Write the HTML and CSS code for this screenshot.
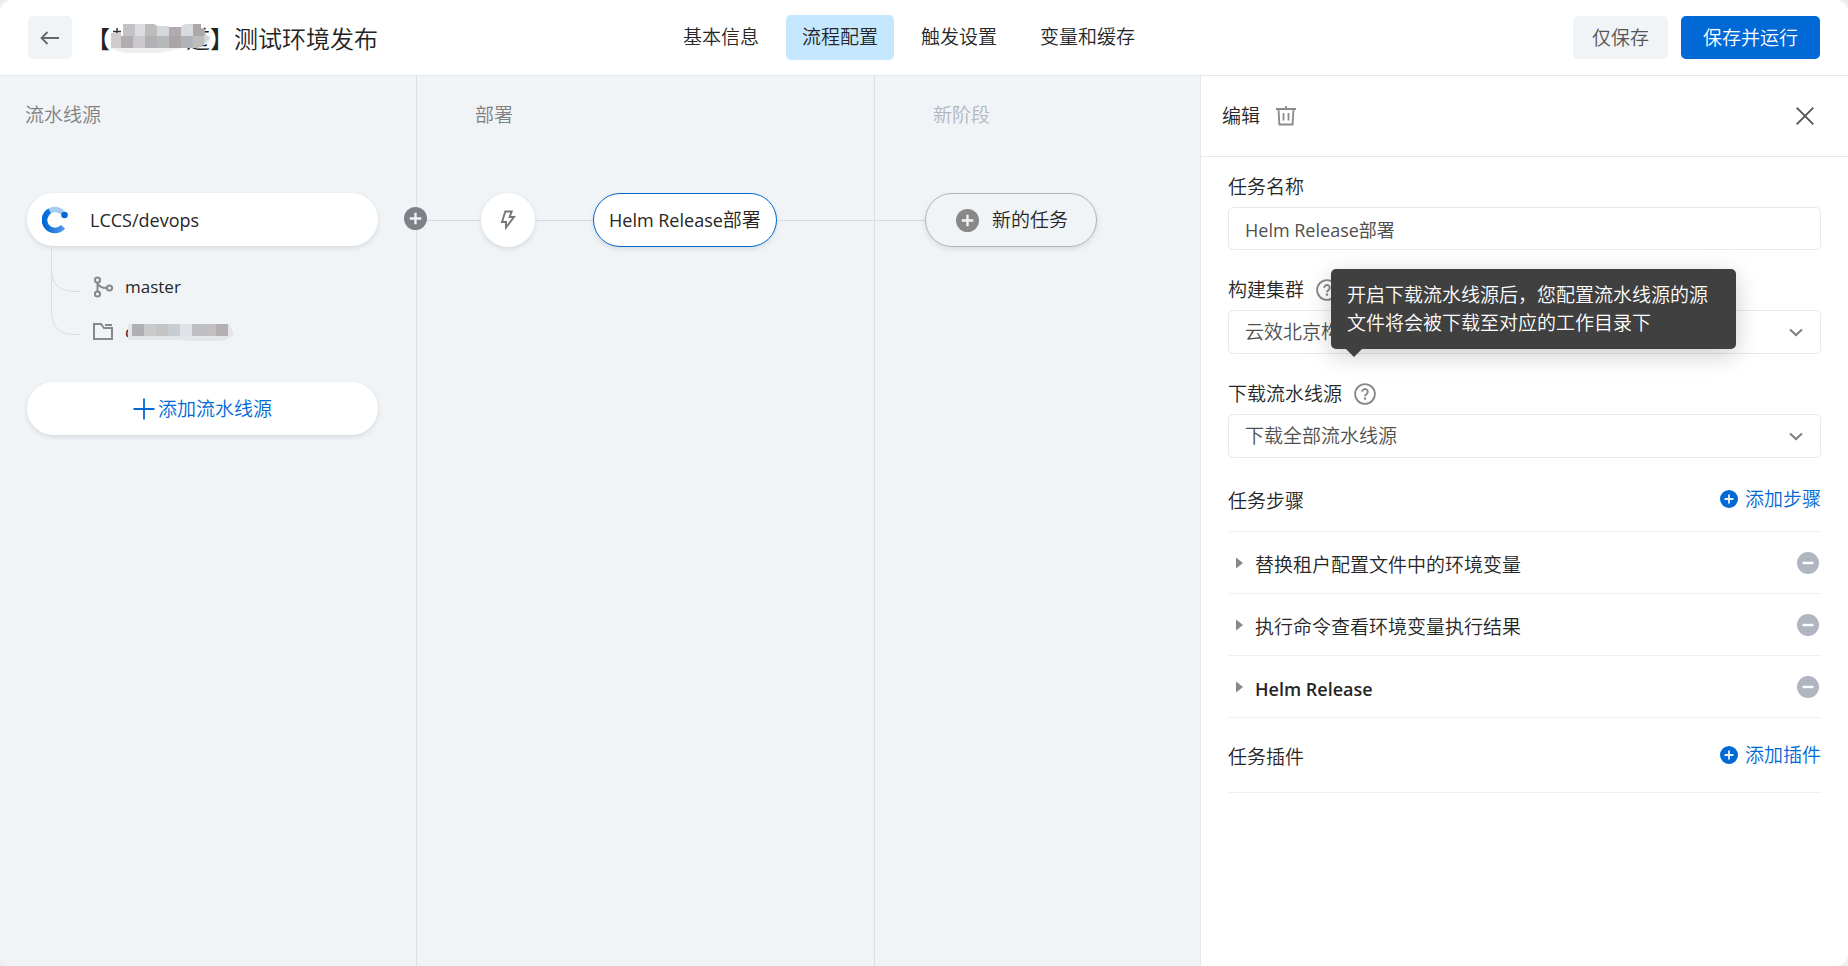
FILE: index.html
```html
<!DOCTYPE html>
<html lang="zh-CN">
<head>
<meta charset="utf-8">
<title>测试环境发布</title>
<link rel="stylesheet" href="styles.css">
</head>
<body>
<svg class="defs" aria-hidden="true">
  <symbol id="plus-dot" viewBox="0 0 24 24"><circle cx="12" cy="12" r="12" fill="currentColor"/><path d="M12 6v12M6 12h12" stroke="#f1f4f7" stroke-width="2.400"/></symbol>
  <symbol id="minus-dot" viewBox="0 0 22 22"><circle cx="11" cy="11" r="11" fill="currentColor"/><path d="M5.500 11h11" stroke="#fff" stroke-width="2.400"/></symbol>
  <symbol id="help" viewBox="0 0 22 22"><circle cx="11" cy="11" r="9.900" fill="none" stroke="currentColor" stroke-width="1.800"/><path d="M8.200 8.800a2.800 2.700 0 1 1 4.400 2.200c-1 .7-1.600 1-1.600 2.200" fill="none" stroke="currentColor" stroke-width="1.900"/><path d="M11 14.500v2.200" stroke="currentColor" stroke-width="2.200"/></symbol>
  <symbol id="chevron" viewBox="0 0 14 9"><path d="M1 1.500l6 5.500 6-5.500" fill="none" stroke="currentColor" stroke-width="2.200"/></symbol>
  <symbol id="caret" viewBox="0 0 7 12"><path d="M0 .5L7 6 0 11.500z" fill="currentColor"/></symbol>
</svg>
<div class="app">
  <header class="topbar">
    <div class="topbar-left">
      <button class="back" type="button" aria-label="返回">
        <svg width="20" height="14" viewBox="0 0 20 14" fill="none" stroke="#666" stroke-width="1.800"><path d="M19 7H1.500M7.500 1L1.500 7l6 6"/></svg>
      </button>
      <h1 class="title">【<span class="masked">道<svg class="mosaic" width="100" height="32" viewBox="0 0 100 32" aria-hidden="true">
        <path d="M1 0h90v12H1z" fill="#fff"/>
        <path d="M3 8.500h8M7 5v7" stroke="#333" stroke-width="1.500"/>
        <path d="M1 12h99v8l-16 5H70q-10 4-24 5H22q-14 0-21-5z" fill="#eee"/>
        <path d="M13 1h12v12H13z" fill="#c4c2c2"/><path d="M25 1h10v12H25z" fill="#dcdde0"/><path d="M35 1h9l5 3v9H35z" fill="#bdbbbb"/><path d="M47 3h12v10H47z" fill="#d5d7da"/><path d="M59 4h12v9H59z" fill="#b1aaac"/><path d="M71 3l5-2h7v12H71z" fill="#d9dade"/><path d="M83 1h8v4l4 1v7H83z" fill="#aca8a9"/>
        <path d="M1 10h10v15H1z" fill="#cfcccd"/><path d="M11 13h12v12H11z" fill="#b1acad"/><path d="M23 13h12v12H23z" fill="#cbc9cd"/><path d="M35 13h12v12H35z" fill="#b0b1b3"/><path d="M47 13h12v12H47z" fill="#b6b8ba"/><path d="M59 13h12v12H59z" fill="#a9a4a5"/><path d="M71 13h12v12H71z" fill="#b0b3b7"/><path d="M83 13h11v9l-6 3h-5z" fill="#bdbdc0"/><path d="M94 11l6 4-6 6z" fill="#d1cfd0"/>
      </svg></span>】测试环境发布</h1>
    </div>
    <nav class="tabs">
      <a class="tab" href="#basic">基本信息</a>
      <a class="tab active" href="#flow" aria-current="page">流程配置</a>
      <a class="tab" href="#trigger">触发设置</a>
      <a class="tab" href="#vars">变量和缓存</a>
    </nav>
    <div class="topbar-right">
      <button class="btn" type="button">仅保存</button>
      <button class="btn primary" type="button">保存并运行</button>
    </div>
  </header>

  <div class="main">
    <main class="canvas">
      <section class="stage sources">
        <h2 class="stage-title">流水线源</h2>
        <div class="source-body">
          <button class="card source-card" type="button">
            <svg width="26" height="28" viewBox="0 0 26 28" fill="none">
              <defs><linearGradient id="lg" x1="0" y1="0" x2="1" y2="0"><stop offset="0" stop-color="#0069d6"/><stop offset="1" stop-color="#4f97e4"/></linearGradient></defs>
              <path d="M7 5.400A10.500 10.500 0 0 1 20.500 6.600" stroke="#a6ccf4" stroke-width="5.500"/>
              <path d="M21 20.800A10.500 10.500 0 1 1 7.750 4.900" stroke="url(#lg)" stroke-width="5.600"/>
              <circle cx="22.500" cy="9" r="3.300" fill="#0069d6"/>
            </svg>
            <span class="latin">LCCS/devops</span>
          </button>
          <div class="source-tree">
            <svg class="branches" width="30" height="91" viewBox="0 0 30 91" fill="none" stroke="#d9dde2" stroke-width="1"><path d="M.5 0V26Q2 44.500 21 45.500H29M.5 20V68Q2 88 21 88.500H29"/></svg>
            <ul class="tree-items">
              <li class="tree-item">
                <svg width="20" height="22" viewBox="0 0 20 22" fill="none" stroke="#888" stroke-width="2"><circle cx="4.500" cy="4" r="2.600"/><circle cx="4.500" cy="18" r="2.600"/><circle cx="16.500" cy="12" r="2.600"/><path d="M4.500 6.600v8.800M4.700 7Q6 12 13.800 12"/></svg>
                <span>master</span>
              </li>
              <li class="tree-item">
                <svg width="20" height="18" viewBox="0 0 20 18" fill="none" stroke="#888" stroke-width="2"><path d="M1 1h7l3 4h8v11H1zM12 2h7"/></svg>
                <span class="masked-path">c<svg class="path-mosaic" width="106" height="19" viewBox="0 0 106 19" aria-hidden="true">
                  <path d="M0 1h101l5 10-5 4-6 3H60l-8-1H0z" fill="#e3e5e8"/><path d="M4 1h12v12H4z" fill="#b0b0b3"/><path d="M16 1h12v12H16z" fill="#c9caca"/><path d="M28 1h12v12H28z" fill="#c4c3c6"/><path d="M40 1h12v12H40z" fill="#c8cdd3"/><path d="M52 1h12v12H52z" fill="#dfe2e7"/><path d="M64 1h12v12H64z" fill="#bfbfc2"/><path d="M76 1h12v12H76z" fill="#c0bfc2"/><path d="M88 1h12v12H88z" fill="#b4b0b0"/>
                </svg></span>
              </li>
            </ul>
          </div>
          <button class="card add-source" type="button">
            <svg width="22" height="22" viewBox="0 0 22 22" stroke="#0069d6" stroke-width="1.800"><path d="M11 .5v21M.5 11h21"/></svg>添加流水线源
          </button>
        </div>
        <button class="stage-plus" type="button" aria-label="添加阶段"><svg width="23" height="23"><use href="#plus-dot"/></svg></button>
      </section>

      <section class="stage deploy">
        <h2 class="stage-title">部署</h2>
        <div class="lane">
          <span class="link link-in"></span>
          <button class="trigger" type="button" aria-label="触发方式">
            <svg width="16" height="20" viewBox="0 0 16 20" fill="none" stroke="#777" stroke-width="1.900"><path d="M5.300 1.500h6.400L9.600 7H14L6 17.500V12H2z"/></svg>
          </button>
          <span class="link link-mid"></span>
          <button class="card task selected" type="button"><span class="latin">Helm Release</span>部署</button>
          <span class="link link-out"></span>
        </div>
      </section>

      <section class="stage new-stage">
        <h2 class="stage-title">新阶段</h2>
        <div class="lane">
          <span class="link link-new"></span>
          <button class="card task new-task" type="button"><svg width="23" height="23"><use href="#plus-dot"/></svg>新的任务</button>
        </div>
      </section>
    </main>

    <aside class="panel">
      <div class="panel-head">
        <h2 class="panel-title">编辑</h2>
        <button class="icon-btn" type="button" aria-label="删除">
          <svg width="22" height="20" viewBox="0 0 22 20" fill="none" stroke="#8a8a8a" stroke-width="1.800"><path d="M1 3h20M3.500 3l.9 15.500h13.200L18.500 3M11 0v3"/><path d="M8.500 7v7.500M13.500 7v7.500"/></svg>
        </button>
        <button class="icon-btn close" type="button" aria-label="关闭">
          <svg width="18" height="18" viewBox="0 0 18 18" stroke="#555" stroke-width="1.900"><path d="M.7.7l16.600 16.600M17.300.7L.7 17.300"/></svg>
        </button>
      </div>
      <form class="form">
        <div class="field">
          <div class="label-row"><label for="task-name">任务名称</label></div>
          <input class="control" id="task-name" type="text" value="Helm Release部署">
        </div>
        <div class="field">
          <div class="label-row"><label for="cluster">构建集群</label><svg class="help" width="22" height="22"><use href="#help"/></svg></div>
          <div class="select-wrap">
            <select class="control" id="cluster"><option>云效北京构建集群</option></select>
            <svg class="chevron" width="14" height="9"><use href="#chevron"/></svg>
          </div>
        </div>
        <div class="field">
          <div class="label-row">
            <label for="download">下载流水线源</label>
            <span class="help-anchor"><svg class="help" width="22" height="22"><use href="#help"/></svg>
              <span class="tooltip" role="tooltip">开启下载流水线源后，您配置流水线源的源文件将会被下载至对应的工作目录下</span>
            </span>
          </div>
          <div class="select-wrap">
            <select class="control" id="download"><option>下载全部流水线源</option></select>
            <svg class="chevron" width="14" height="9"><use href="#chevron"/></svg>
          </div>
        </div>

        <div class="section-head steps-head">
          <h3>任务步骤</h3>
          <button class="add-link" type="button"><svg width="18" height="18"><use href="#plus-dot"/></svg>添加步骤</button>
        </div>
        <ul class="steps">
          <li class="step"><svg class="caret" width="7" height="12"><use href="#caret"/></svg><span class="step-name">替换租户配置文件中的环境变量</span><button class="remove" type="button" aria-label="移除"><svg width="22" height="22"><use href="#minus-dot"/></svg></button></li>
          <li class="step"><svg class="caret" width="7" height="12"><use href="#caret"/></svg><span class="step-name">执行命令查看环境变量执行结果</span><button class="remove" type="button" aria-label="移除"><svg width="22" height="22"><use href="#minus-dot"/></svg></button></li>
          <li class="step"><svg class="caret" width="7" height="12"><use href="#caret"/></svg><span class="step-name latin strong">Helm Release</span><button class="remove" type="button" aria-label="移除"><svg width="22" height="22"><use href="#minus-dot"/></svg></button></li>
        </ul>
        <div class="section-head plugins-head">
          <h3>任务插件</h3>
          <button class="add-link" type="button"><svg width="18" height="18"><use href="#plus-dot"/></svg>添加插件</button>
        </div>
      </form>
    </aside>
  </div>
</div>
</body>
</html>
```
FILE: styles.css
```css
* { box-sizing: border-box; }
body {
  margin: 0;
  background: #eeeeee;
  color: #262626;
  font-family: "Open Sans", "Noto Sans CJK SC", sans-serif;
  font-size: 19px;
  font-weight: 350;
  line-height: 28px;
}
h1, h2, h3, ul { margin: 0; padding: 0; font-size: inherit; font-weight: inherit; list-style: none; }
button, input, select { font: inherit; color: inherit; margin: 0; padding: 0; border: 0; background: none; cursor: pointer; }
svg { display: block; flex: none; }
.defs { display: none; }
.latin { font-size: 18px; font-weight: 400; }

.app { display: flex; flex-direction: column; min-height: 100vh; border-radius: 12px; overflow: hidden; background: #fff; }

.topbar { display: grid; grid-template-columns: 1fr auto 1fr; align-items: center; height: 76px; padding: 0 28px; border-bottom: 1px solid #e6e9ec; }
.topbar-left { display: flex; align-items: center; gap: 14px; }
.back { display: grid; place-items: center; width: 44px; height: 43px; border-radius: 5px; background: #f0f4f7; }
.title { display: flex; padding-top: 2px; font-size: 24px; line-height: 36px; white-space: nowrap; color: #222; }
.masked { position: relative; display: flex; justify-content: flex-end; width: 100px; }
.mosaic { position: absolute; left: 0; top: 2px; }
.tabs { display: flex; gap: 11px; margin-right: 30px; }
.tab { padding: 8px 16px 9px; border-radius: 5px; color: inherit; text-decoration: none; }
.tab.active { background: #c5e7ff; }
.topbar-right { display: flex; justify-content: flex-end; gap: 13px; }
.btn { height: 43px; padding: 0 19px; border-radius: 5px; background: #f0f4f7; color: #555; }
.btn.primary { padding: 0 22px; background: #0069d6; color: #fff; }

.main { display: flex; flex: 1; }
.canvas { display: flex; flex: 1; min-width: 0; background: #f0f4f7; }
.stage { position: relative; padding-top: 25px; border-right: 1px solid #dadfe6; }
.stage-title { margin-bottom: 64px; padding-left: 58px; color: #808080; }
.sources { flex: 0 0 417px; }
.sources .stage-title { padding-left: 25px; }
.deploy { flex: 0 0 458px; }
.new-stage { flex: 1; border-right: 0; }
.new-stage .stage-title { color: #b0b6bd; }

.card { display: flex; align-items: center; height: 53px; border-radius: 27px; background: #fff; box-shadow: 0 2px 5px rgba(60, 70, 80, 0.14); white-space: nowrap; }
.source-body { padding: 0 38px 0 27px; }
.source-card { width: 100%; gap: 22px; padding: 0 15px; }
.source-tree { display: flex; gap: 12px; padding-left: 24px; }
.tree-items { display: flex; flex-direction: column; gap: 17px; padding: 27px 0 36px; font-size: 17px; font-weight: 400; }
.tree-item { display: flex; align-items: center; gap: 12px; }
.masked-path { position: relative; }
.path-mosaic { position: absolute; left: 3px; top: 5px; }
.add-source { width: 100%; justify-content: center; gap: 3px; color: #0069d6; }
.stage-plus { position: absolute; top: 131px; right: -11px; z-index: 1; color: #7d8288; }

.lane { display: flex; align-items: center; height: 54px; }
.link { height: 1px; background: #d6dbe3; }
.link-in { width: 64px; }
.link-mid { width: 58px; }
.link-out { flex: 1; }
.link-new { width: 50px; }
.trigger { display: grid; place-items: center; width: 54px; height: 54px; border-radius: 50%; background: #fff; box-shadow: 0 2px 5px rgba(60, 70, 80, 0.14); }
.task { height: 54px; padding: 0 15px; border: 1px solid #0069d6; }
.new-task { gap: 13px; padding: 0 28px 0 30px; border-color: #b0b6bf; background: #f0f4f7; }
.new-task svg { color: #888; }

.panel { flex: 0 0 648px; border-left: 1px solid #e6e9ec; background: #fff; }
.panel-head { display: flex; align-items: center; gap: 15px; height: 81px; padding: 0 34px 0 21px; border-bottom: 1px solid #e6e9ec; }
.close { margin-left: auto; }
.form { padding: 16px 27px 0; }
.field { margin-bottom: 26px; }
.label-row { display: flex; align-items: center; gap: 12px; margin-bottom: 6px; }
.help { color: #888; }
.control { display: block; width: 100%; height: 44px; padding: 0 16px; border: 1px solid #e6e9ec; border-radius: 5px; background: #fff; color: #505050; appearance: none; }
input.control { height: 43px; font-size: 18px; font-weight: 400; }
.select-wrap { position: relative; }
.chevron { position: absolute; right: 18px; top: 18px; color: #7d8288; pointer-events: none; }
.help-anchor { position: relative; }
.tooltip { position: absolute; left: -23px; bottom: 56px; z-index: 2; width: 405px; padding: 12px 16px; border-radius: 5px; background: #404040; color: #fff; box-shadow: 0 6px 24px rgba(0, 0, 0, 0.2); }
.tooltip::after { content: ""; position: absolute; left: 15px; top: 100%; border: 8px solid transparent; border-top-color: #404040; border-bottom: 0; }

.section-head { display: flex; align-items: center; justify-content: space-between; border-bottom: 1px solid #eff2f5; }
.steps-head { height: 48px; padding-bottom: 18px; }
.plugins-head { height: 75px; }
.section-head h3 { padding-top: 4px; }
.add-link { display: flex; align-items: center; gap: 7px; color: #0069d6; }
.step { display: flex; align-items: center; height: 62px; padding: 0 2px 0 8px; border-bottom: 1px solid #eff2f5; }
.caret { color: #888; }
.step-name { flex: 1; padding: 4px 0 0 12px; }
.strong { font-weight: 600; }
.remove { color: #b0b6bf; }
```
